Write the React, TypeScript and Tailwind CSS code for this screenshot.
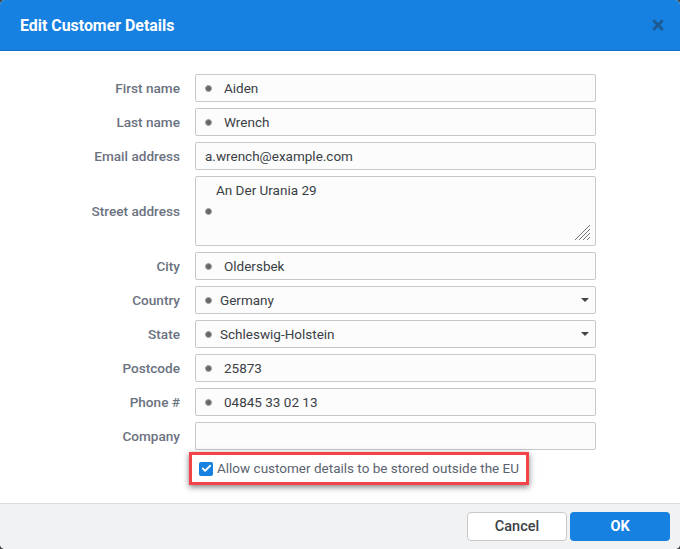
import { Check } from "lucide-react";
import { FaTimes } from "react-icons/fa";

type Field = {
  label: string;
  value?: string;
  dot?: boolean;
  select?: boolean;
};

const TOP_FIELDS: Field[] = [
  { label: "First name", value: "Aiden", dot: true },
  { label: "Last name", value: "Wrench", dot: true },
  { label: "Email address", value: "a.wrench@example.com" },
];

const BOTTOM_FIELDS: Field[] = [
  { label: "City", value: "Oldersbek", dot: true },
  { label: "Country", value: "Germany", dot: true, select: true },
  { label: "State", value: "Schleswig-Holstein", dot: true, select: true },
  { label: "Postcode", value: "25873", dot: true },
  { label: "Phone #", value: "04845 33 02 13", dot: true },
  { label: "Company" },
];

function Dot() {
  return <span className="w-[7px] h-[7px] shrink-0 rounded-full bg-[#666] border border-[#a0a0a0]" />;
}

function Label({ children }: { children: string }) {
  return (
    <label className="w-[180px] shrink-0 text-right text-[13.6px] font-medium text-[#6b7280]">{children}</label>
  );
}

function Row({ field }: { field: Field }) {
  return (
    <div className="flex items-center gap-[15px]">
      <Label>{field.label}</Label>
      <div className="flex items-center w-[401px] h-[28px] px-[9px] bg-[#fcfcfc] border border-[#c8c8c8] rounded-[2px] text-[13.5px] text-[#3a3f45]">
        {field.dot && (
          <span className={`flex items-center ${field.select ? "w-[15px]" : "w-[19px]"}`}>
            <Dot />
          </span>
        )}
        <span className="flex-1">{field.value}</span>
        {field.select && <span className="mr-[-3px] w-0 h-0 border-x-[4px] border-x-transparent border-t-[4px] border-t-[#444]" />}
      </div>
    </div>
  );
}

export default function App() {
  return (
    <div className="h-[549px] w-[680px] bg-[#444] font-['Roboto',sans-serif]">
      <div className="flex flex-col h-full bg-white rounded-[5px] overflow-hidden">
        {/* Header */}
        <div className="flex items-center justify-between h-[51px] shrink-0 pl-[20px] pr-[14px] bg-[#1781e1] border-b border-[#1670c4]">
          <h1 className="mt-[2px] text-[15.9px] font-bold text-white">Edit Customer Details</h1>
          <FaTimes className="w-[16px] h-[16px] text-[#1c5a94]" />
        </div>

        {/* Form */}
        <div className="flex-1 flex flex-col gap-[6px] pt-[23px]">
          {TOP_FIELDS.map((f) => (
            <Row key={f.label} field={f} />
          ))}
          <div className="flex items-center gap-[15px]">
            <Label>Street address</Label>
            <div className="relative flex items-center w-[401px] h-[70px] pl-[9px] bg-[#fcfcfc] border border-[#c8c8c8] rounded-[2px] text-[13.5px] text-[#3a3f45]">
              <Dot />
              <span className="self-start ml-[4px] mt-[3px]">An Der Urania 29</span>
              <svg className="absolute right-[5px] bottom-[5px]" width="15" height="15" viewBox="0 0 15 15" stroke="#777" strokeWidth="1">
                <path d="M0 15 15 0M4 15 15 4M8 15 15 8M12 15 15 12" />
              </svg>
            </div>
          </div>
          {BOTTOM_FIELDS.map((f) => (
            <Row key={f.label} field={f} />
          ))}
          <div className="flex items-center gap-[4px] w-[340px] h-[33px] ml-[189px] mt-[-4px] pl-[7px] border-[3px] border-[#f44346] shadow-[0_2px_6px_rgba(0,0,0,0.5)] text-[13.5px] font-normal text-[#5b6370]">
            <span className="flex items-center justify-center w-[14px] h-[14px] shrink-0 rounded-[2px] bg-[#1781e1]">
              <Check className="w-[11px] h-[11px] text-white" strokeWidth={4} />
            </span>
            <span className="whitespace-nowrap">Allow customer details to be stored outside the EU</span>
          </div>
        </div>

        {/* Footer */}
        <div className="flex items-center justify-end gap-[3px] h-[46px] shrink-0 pr-[10px] bg-[#f1f2f4] border-t border-[#dcdcdc]">
          <button className="w-[100px] h-[29px] bg-white border border-[#c8c8c8] rounded-[4px] text-[14.5px] font-medium text-[#3a3f45]">Cancel</button>
          <button className="w-[100px] h-[29px] bg-[#1781e1] rounded-[4px] text-[14.5px] font-bold text-white">OK</button>
        </div>
      </div>
    </div>
  );
}
